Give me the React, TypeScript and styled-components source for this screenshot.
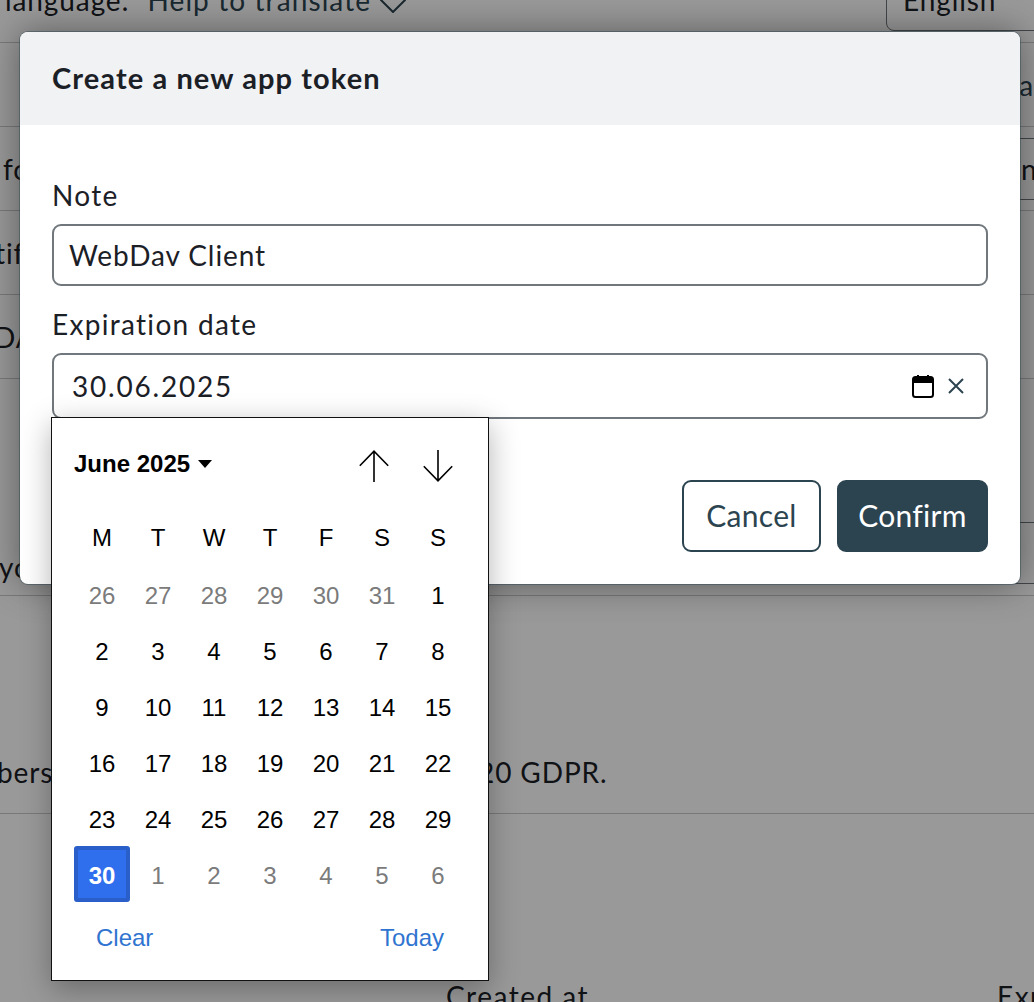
import styled, { createGlobalStyle } from 'styled-components';

const GlobalStyle = createGlobalStyle`
	html, body {
		margin: 0;
		padding: 0;
		height: 100%;
		overflow: hidden;
	}

	body {
		font-family: Lato, "Noto Sans", sans-serif;
		color: #1b2026;
		letter-spacing: 0.9px;
	}
`;

const Page = styled.div`
	position: relative;
	width: 1034px;
	height: 1002px;
	overflow: hidden;
	background: #fff;
`;

const SettingsList = styled.div`
	display: flex;
	flex-direction: column;
	margin-top: -42px;
`;

const SettingsRow = styled.div<{ $height: number; $padBottom?: number }>`
	display: flex;
	align-items: ${p => (p.$padBottom ? 'flex-end' : 'center')};
	flex: 0 0 ${p => p.$height}px;
	box-sizing: border-box;
	padding-bottom: ${p => p.$padBottom ?? 0}px;
	border-bottom: 1px solid #c6cacd;
	font-size: 28px;
	white-space: nowrap;
`;

const RowText = styled.span<{ $offset?: number; $width?: number }>`
	margin-left: ${p => p.$offset ?? 0}px;
	${p => (p.$width ? `flex: 0 0 ${p.$width}px;` : '')}
`;

const TranslateLink = styled.span`
	margin-left: 18px;
	color: #2c4450;
	letter-spacing: 1.1px;
`;

const TranslateIcon = styled.svg`
	margin-left: 9px;
	vertical-align: -2px;
`;

const RowLink = styled.span`
	margin-left: auto;
	color: #2c4450;
`;

const RowSelect = styled.div<{ $indent: number }>`
	display: flex;
	align-items: center;
	flex: 0 0 180px;
	height: 62px;
	box-sizing: border-box;
	margin-left: auto;
	margin-right: -32px;
	padding-left: ${p => p.$indent}px;
	border: 1px solid #6f777c;
	border-radius: 8px;
`;

const TableHead = styled.div`
	display: flex;
	height: 189px;
	box-sizing: border-box;
	padding: 165px 0 0 446px;
	font-size: 28px;
	letter-spacing: 1.5px;
	white-space: nowrap;
`;

const Backdrop = styled.div`
	position: absolute;
	inset: 0;
	background: rgba(0, 0, 0, 0.4);
`;

const Modal = styled.div`
	position: absolute;
	top: 32px;
	left: 20px;
	width: 1000px;
	height: 552px;
	border-radius: 8px;
	overflow: hidden;
	background: #fff;
	box-shadow: 0 0 0 1px rgba(44, 68, 80, 0.45), 0 0 36px rgba(0, 0, 0, 0.42);
`;

const ModalHeader = styled.div`
	display: flex;
	align-items: center;
	height: 93px;
	box-sizing: border-box;
	padding: 0 0 3px 32px;
	background: #f1f2f4;
	font-size: 29px;
	font-weight: 700;
	letter-spacing: 1.1px;
`;

const ModalBody = styled.div`
	display: flex;
	flex-direction: column;
	padding: 54px 32px 0;
`;

const FieldLabel = styled.div`
	height: 32px;
	font-size: 28px;
	line-height: 32px;
	letter-spacing: 1.3px;
`;

const Field = styled.div<{ $height: number }>`
	display: flex;
	align-items: center;
	height: ${p => p.$height}px;
	margin: 13px 0 22px;
	padding: 0 21px 0 15px;
	box-sizing: border-box;
	border: 2px solid #71787d;
	border-radius: 9px;
	font-size: 28px;
`;

const DateValue = styled.span`
	flex: 1;
	padding-left: 3px;
	letter-spacing: 1.8px;
`;

const ClearIcon = styled.svg`
	margin-left: 13px;
`;

const Actions = styled.div`
	display: flex;
	justify-content: flex-end;
	gap: 16px;
	margin-top: 39px;
`;

const Button = styled.div<{ $primary?: boolean }>`
	display: flex;
	align-items: center;
	justify-content: center;
	width: ${p => (p.$primary ? 151 : 139)}px;
	height: 72px;
	box-sizing: border-box;
	padding-bottom: 2px;
	border: 2px solid #2c4450;
	border-radius: 9px;
	background: ${p => (p.$primary ? '#2c4450' : '#fff')};
	color: ${p => (p.$primary ? '#fff' : '#2c4450')};
	font-size: 30px;
	letter-spacing: 0.3px;
`;

const Picker = styled.div`
	position: absolute;
	top: 417px;
	left: 51px;
	width: 438px;
	height: 564px;
	box-sizing: border-box;
	padding: 0 22px;
	border: 1px solid #111;
	background: #fff;
	box-shadow: 0 8px 28px rgba(0, 0, 0, 0.3);
	font-family: "Liberation Sans", Arial, sans-serif;
	letter-spacing: 0;
	color: #000;
`;

const PickerHead = styled.div`
	display: flex;
	align-items: center;
	height: 92px;
`;

const MonthLabel = styled.span`
	font-size: 24px;
	font-weight: 700;
`;

const MonthCaret = styled.span`
	width: 0;
	height: 0;
	margin-left: 8px;
	border-left: 7px solid transparent;
	border-right: 7px solid transparent;
	border-top: 8px solid #000;
`;

const StepButtons = styled.div`
	display: flex;
	gap: 34px;
	margin: 4px 13px 0 auto;
`;

const DayGrid = styled.div`
	display: grid;
	grid-template-columns: repeat(7, 56px);
	grid-auto-rows: 56px;
`;

const DayCell = styled.div<{ $muted?: boolean; $weekday?: boolean }>`
	display: flex;
	align-items: center;
	justify-content: center;
	box-sizing: border-box;
	padding-top: ${p => (p.$weekday ? 0 : 4)}px;
	font-size: 24px;
	color: ${p => (p.$muted ? '#7b7b7b' : '#000')};
`;

const SelectedDay = styled(DayCell)`
	padding-top: 3px;
	border: 4px solid #2a5fc9;
	border-radius: 3px;
	background: #2f6fee;
	color: #fff;
	font-weight: 700;
`;

const PickerFoot = styled.div`
	display: flex;
	justify-content: space-between;
	padding: 22px 22px 0;
	font-size: 24px;
	color: #2f74d0;
`;

const weekdays = ['M', 'T', 'W', 'T', 'F', 'S', 'S'];
const leadingDays = [26, 27, 28, 29, 30, 31];
const monthDays = Array.from({ length: 29 }, (_, i) => i + 1);
const trailingDays = [1, 2, 3, 4, 5, 6];

const App = () => {
	return (
		<Page>
			<GlobalStyle />
			<SettingsList>
				<SettingsRow $height={85}>
					<RowText $offset={5}>
						language:
						<TranslateLink>Help to translate</TranslateLink>
						<TranslateIcon width="26" height="26" viewBox="0 0 26 26" fill="none">
							<path d="M13 1l12 12-12 12L1 13z" stroke="#2c4450" strokeWidth="2" />
						</TranslateIcon>
					</RowText>
					<RowSelect $indent={16}>English</RowSelect>
				</SettingsRow>
				<SettingsRow $height={84}>
					<RowLink>a</RowLink>
				</SettingsRow>
				<SettingsRow $height={84}>
					<RowText $offset={3}>fo</RowText>
					<RowSelect $indent={134}>n</RowSelect>
				</SettingsRow>
				<SettingsRow $height={84}>
					<RowText $offset={-5}>tif</RowText>
				</SettingsRow>
				<SettingsRow $height={84}>
					<RowText $offset={-6}>DA</RowText>
				</SettingsRow>
				<SettingsRow $height={217} $padBottom={11}>
					<RowText $offset={-1}>yo</RowText>
					<RowSelect $indent={134} />
				</SettingsRow>
				<SettingsRow $height={218} $padBottom={24}>
					<RowText $offset={-3} $width={481}>bers</RowText>
					<RowText>20 GDPR.</RowText>
				</SettingsRow>
				<TableHead>
					<RowText $width={551}>Created at</RowText>
					<RowText>Expires</RowText>
				</TableHead>
			</SettingsList>
			<Backdrop />
			<Modal>
				<ModalHeader>Create a new app token</ModalHeader>
				<ModalBody>
					<FieldLabel>Note</FieldLabel>
					<Field $height={62}>WebDav Client</Field>
					<FieldLabel>Expiration date</FieldLabel>
					<Field $height={66}>
						<DateValue>30.06.2025</DateValue>
						<svg width="22" height="24" viewBox="0 0 22 24" fill="none">
							<rect x="1" y="3" width="20" height="20" rx="2.5" stroke="#000" strokeWidth="2" />
							<path d="M1 4h20v5H1z" fill="#000" />
							<path d="M6 1v4M16 1v4" stroke="#000" strokeWidth="2" />
						</svg>
						<ClearIcon width="18" height="18" viewBox="0 0 18 18" fill="none">
							<path d="M2 2l14 14M16 2L2 16" stroke="#2c4450" strokeWidth="2" />
						</ClearIcon>
					</Field>
					<Actions>
						<Button>Cancel</Button>
						<Button $primary>Confirm</Button>
					</Actions>
				</ModalBody>
			</Modal>
			<Picker>
				<PickerHead>
					<MonthLabel>June 2025</MonthLabel>
					<MonthCaret />
					<StepButtons>
						<svg width="30" height="32" viewBox="0 0 30 32" fill="none">
							<path d="M15 32V1M.8 15.8L15 1.2l14.2 14.6" stroke="#000" strokeWidth="1.6" />
						</svg>
						<svg width="30" height="32" viewBox="0 0 30 32" fill="none">
							<path d="M15 0v31M.8 16.2L15 30.8l14.2-14.6" stroke="#000" strokeWidth="1.6" />
						</svg>
					</StepButtons>
				</PickerHead>
				<DayGrid>
					{weekdays.map((day, idx) => (
						<DayCell key={idx} $weekday>{day}</DayCell>
					))}
					{leadingDays.map(day => (
						<DayCell key={`prev-${day}`} $muted>{day}</DayCell>
					))}
					{monthDays.map(day => (
						<DayCell key={day}>{day}</DayCell>
					))}
					<SelectedDay>30</SelectedDay>
					{trailingDays.map(day => (
						<DayCell key={`next-${day}`} $muted>{day}</DayCell>
					))}
				</DayGrid>
				<PickerFoot>
					<span>Clear</span>
					<span>Today</span>
				</PickerFoot>
			</Picker>
		</Page>
	);
};

export default App;
